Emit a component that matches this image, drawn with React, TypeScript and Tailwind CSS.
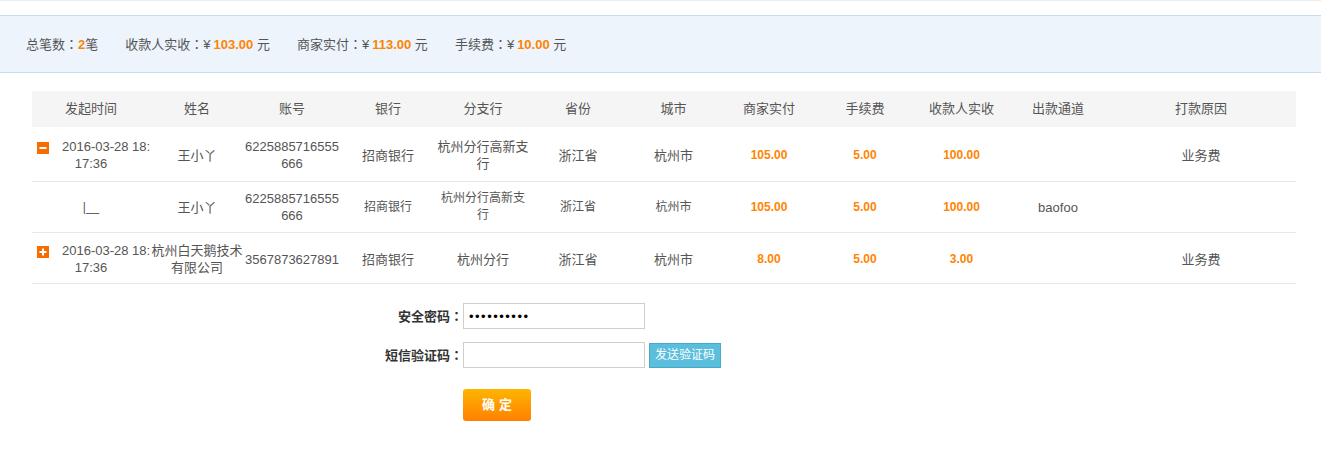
import React from 'react'

// fixed column template shared by header and rows
const COLS = 'grid grid-cols-[118px_94px_96px_96px_94px_96px_95px_96px_96px_97px_96px_190px]'

function ToggleIcon({ open }: { open: boolean }) {
  return (
    <svg width="12" height="12" viewBox="0 0 12 12" className="block">
      <rect width="12" height="12" fill="#f56d00" />
      <rect x="2.5" y="5" width="7" height="2" fill="#fff" />
      {!open && <rect x="5" y="2.5" width="2" height="7" fill="#fff" />}
    </svg>
  )
}

// centered full-width colon, like the original page font
function Colon() {
  return <span className="font-['Noto_Sans_CJK_JP',sans-serif]">：</span>
}

function DateCell({ open }: { open: boolean }) {
  return (
    <div className="flex items-center">
      <div className="w-full">
        <span className="float-left ml-[5px] mr-[13px] mt-[4px]">
          <ToggleIcon open={open} />
        </span>
        <div className="text-center leading-[17px] whitespace-nowrap">
          2016-03-28 18:
          <br />
          17:36
        </div>
      </div>
    </div>
  )
}

const cell = 'flex items-center justify-center text-center leading-[17px]'
const money = 'flex items-center justify-center text-[12px] font-bold text-[#ff8400]'

export default function App() {
  return (
    <div className="w-[1321px] h-[458px] bg-white text-[#555] font-['Liberation_Sans','Noto_Sans_CJK_SC',sans-serif]">
      <div className="h-[15px] border-t border-[#ececec]" />

      {/* Summary */}
      <div className="h-[58px] border-y border-[#c4dbf0] bg-[#edf4fc] flex items-center gap-[27px] px-[26px] pt-[1px] text-[13px]">
        <span>
          总笔数<Colon />
          <b className="text-[#ff8400]">2</b>笔
        </span>
        <span>
          收款人实收<Colon />¥<b className="ml-[3px] text-[#ff8400]">103.00</b> 元
        </span>
        <span>
          商家实付<Colon />¥<b className="ml-[3px] text-[#ff8400]">113.00</b> 元
        </span>
        <span>
          手续费<Colon />¥<b className="ml-[3px] text-[#ff8400]">10.00</b> 元
        </span>
      </div>

      {/* Table */}
      <div className="ml-[32px] mt-[18px] w-[1264px]">
        <div className={`${COLS} h-[36px] bg-[#f5f5f5] text-[13px] items-center text-center`}>
          <div>发起时间</div>
          <div>姓名</div>
          <div>账号</div>
          <div>银行</div>
          <div>分支行</div>
          <div>省份</div>
          <div>城市</div>
          <div>商家实付</div>
          <div>手续费</div>
          <div>收款人实收</div>
          <div>出款通道</div>
          <div>打款原因</div>
        </div>

        <div className={`${COLS} h-[55px] pt-[2px] border-b border-[#e8e8e8] text-[13px]`}>
          <DateCell open />
          <div className={cell}>王小丫</div>
          <div className={cell}>
            6225885716555
            <br />
            666
          </div>
          <div className={cell}>招商银行</div>
          <div className={cell}>
            杭州分行高新支
            <br />
            行
          </div>
          <div className={cell}>浙江省</div>
          <div className={cell}>杭州市</div>
          <div className={money}>105.00</div>
          <div className={money}>5.00</div>
          <div className={money}>100.00</div>
          <div className={cell}></div>
          <div className={cell}>业务费</div>
        </div>

        <div className={`${COLS} h-[51px] border-b border-[#e8e8e8] text-[13px]`}>
          <div className={`${cell} text-[12px]`}>|__</div>
          <div className={cell}>王小丫</div>
          <div className={cell}>
            6225885716555
            <br />
            666
          </div>
          <div className={`${cell} text-[12px]`}>招商银行</div>
          <div className={`${cell} text-[12px]`}>
            杭州分行高新支
            <br />
            行
          </div>
          <div className={`${cell} text-[12px]`}>浙江省</div>
          <div className={`${cell} text-[12px]`}>杭州市</div>
          <div className={money}>105.00</div>
          <div className={money}>5.00</div>
          <div className={money}>100.00</div>
          <div className={cell}>baofoo</div>
          <div className={cell}></div>
        </div>

        <div className={`${COLS} h-[51px] pt-[2px] border-b border-[#e8e8e8] text-[13px]`}>
          <DateCell open={false} />
          <div className={cell}>
            杭州白天鹅技术
            <br />
            有限公司
          </div>
          <div className={cell}>3567873627891</div>
          <div className={cell}>招商银行</div>
          <div className={cell}>杭州分行</div>
          <div className={cell}>浙江省</div>
          <div className={cell}>杭州市</div>
          <div className={money}>8.00</div>
          <div className={money}>5.00</div>
          <div className={money}>3.00</div>
          <div className={cell}></div>
          <div className={cell}>业务费</div>
        </div>
      </div>

      {/* Form */}
      <div className="mt-[19px]">
        <div className="flex items-center h-[26px]">
          <label className="w-[463px] text-right text-[13px] font-bold text-[#333]">
            安全密码<Colon />
          </label>
          <input
            type="password"
            readOnly
            value="1234567890"
            className="w-[182px] h-[26px] border border-[#cfcfcf] px-[5px] text-[13px] tracking-[1.5px] text-black outline-none"
          />
        </div>
        <div className="flex items-center h-[26px] mt-[13px]">
          <label className="w-[463px] text-right text-[13px] font-bold text-[#333]">
            短信验证码<Colon />
          </label>
          <input type="text" className="w-[182px] h-[26px] border border-[#cfcfcf] px-[5px] text-[13px] outline-none" />
          <button className="ml-[4px] w-[72px] h-[25px] bg-[#5bbedc] border border-[#46a9c9] text-white text-[12px] leading-none">
            发送验证码
          </button>
        </div>
        <button className="ml-[463px] mt-[21px] w-[68px] h-[32px] rounded-[3px] bg-linear-to-b from-[#ffb400] to-[#ff8000] text-white text-[13px] font-bold tracking-[4px] pl-[4px]">
          确定
        </button>
      </div>
    </div>
  )
}
